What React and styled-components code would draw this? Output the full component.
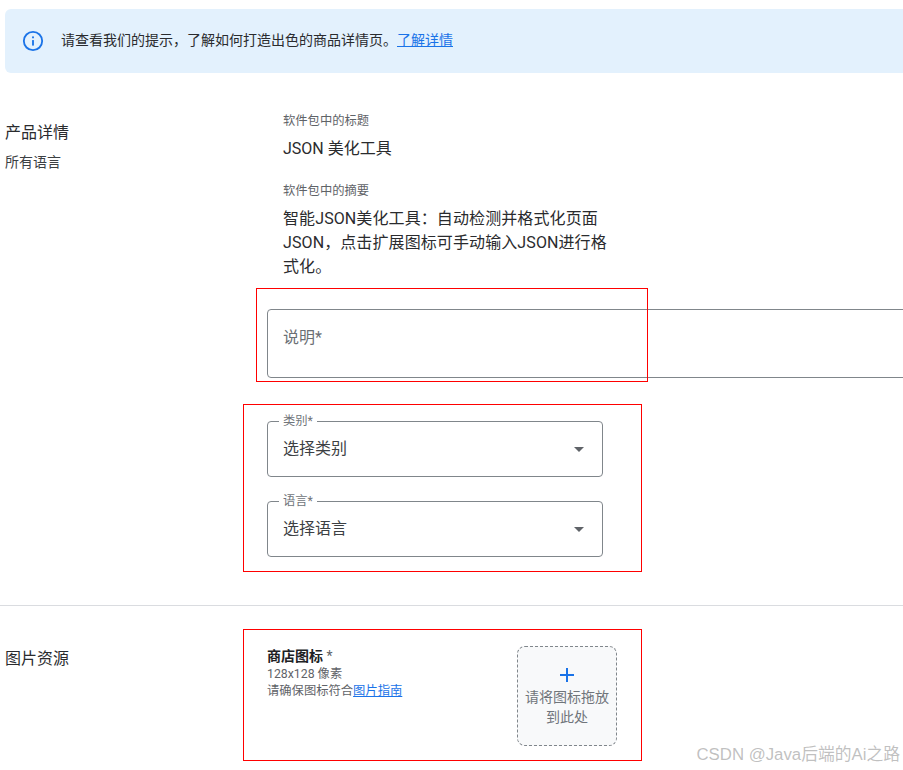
import React from "react";
import styled, { createGlobalStyle } from "styled-components";

const Global = createGlobalStyle`
  html, body { margin: 0; padding: 0; background: #fff; overflow: hidden; }
  body { font-family: Roboto, "Noto Sans CJK SC", sans-serif; color: #2a2b2e; }
`;
const Page = styled.div`
  position: relative;
  width: 903px;
  height: 770px;
  overflow: hidden;
  padding-top: 9px;
  box-sizing: border-box;
`;
const Banner = styled.div`
  display: flex;
  align-items: center;
  gap: 17px;
  height: 64px;
  margin-left: 5px;
  margin-right: -20px;
  padding-left: 17px;
  background: #e3f1fd;
  border-radius: 6px;
  font-size: 14px;
`;
const BannerIcon = styled.svg`
  width: 22px;
  height: 22px;
  flex: none;
`;
const BannerText = styled.span`
  padding-bottom: 5px;
`;
const Link = styled.a`
  color: #1a73e8;
  text-decoration: underline;
`;
const Section = styled.section`
  display: grid;
  grid-template-columns: 262px 1fr;
  padding-left: 5px;
  padding-top: ${(p) => p.$top}px;
`;
const SideTitle = styled.div`
  font-size: 16px;
  line-height: 24px;
  padding-top: ${(p) => p.$top}px;
`;
const SideSub = styled.div`
  font-size: 14px;
  line-height: 20px;
  margin-top: 7px;
  color: #3c4043;
`;
const ReadOnly = styled.div`
  padding-left: 16px;
  margin-bottom: ${(p) => p.$gap}px;
`;
const ReadLabel = styled.div`
  font-size: 12.3px;
  line-height: 16px;
  color: #5f6368;
  margin-bottom: 8px;
`;
const ReadValue = styled.div`
  font-size: 16px;
  line-height: 24px;
  width: 330px;
  letter-spacing: ${(p) => p.$track || 0}px;
`;
const Description = styled.div`
  box-sizing: border-box;
  height: 69px;
  margin-right: -40px;
  margin-top: 30px;
  padding: 16px 15px;
  border: 1px solid #80868b;
  border-radius: 4px;
  font-size: 16px;
  line-height: 24px;
  color: #6b6f74;
`;
const Select = styled.div`
  position: relative;
  box-sizing: border-box;
  display: flex;
  align-items: center;
  justify-content: space-between;
  width: 336px;
  height: 56px;
  margin-top: ${(p) => p.$top}px;
  padding: 0 18px 0 15px;
  border: 1px solid #80868b;
  border-radius: 4px;
  font-size: 16px;
  color: #3c4043;
`;
const SelectValue = styled.span`
  padding-bottom: 4px;
`;
const Legend = styled.span`
  position: absolute;
  left: 11px;
  top: -9px;
  padding: 0 4px;
  background: #fff;
  font-size: 12.3px;
  line-height: 16px;
  color: #70757a;
`;
const Caret = styled.span`
  width: 0;
  height: 0;
  border-left: 5px solid transparent;
  border-right: 5px solid transparent;
  border-top: 5px solid #5f6368;
`;
const Divider = styled.hr`
  margin: 48px 0 0;
  border: 0;
  border-top: 1px solid #dadce0;
`;
const AssetRow = styled.div`
  display: flex;
  width: 350px;
  justify-content: space-between;
`;
const AssetText = styled.div`
  padding-top: 0;
`;
const AssetTitle = styled.div`
  font-size: 14px;
  line-height: 20px;
  font-weight: 700;
  color: #202124;
`;
const Star = styled.span`
  font-weight: 400;
  color: #5f6368;
`;
const AssetNote = styled.div`
  font-size: 12.3px;
  line-height: 17px;
  color: #5f6368;
`;
const Drop = styled.div`
  box-sizing: border-box;
  display: flex;
  flex-direction: column;
  align-items: center;
  width: 100px;
  height: 100px;
  padding-top: 20px;
  background: #f8f9fa;
  border: 1px dashed #80868b;
  border-radius: 8px;
  font-size: 14px;
  line-height: 20px;
  color: #70757a;
  text-align: center;
`;
const Plus = styled.svg`
  width: 16px;
  height: 16px;
  margin-bottom: 4px;
`;
const Annotation = styled.div`
  position: absolute;
  left: ${(p) => p.$x}px;
  top: ${(p) => p.$y}px;
  width: ${(p) => p.$w}px;
  height: ${(p) => p.$h}px;
  box-sizing: border-box;
  border: 1px solid #f00;
  pointer-events: none;
`;
const Watermark = styled.div`
  position: absolute;
  right: 3px;
  top: 744px;
  font-family: "Liberation Sans", "Noto Sans CJK SC", sans-serif;
  font-size: 16.8px;
  line-height: 22px;
  color: rgba(130, 130, 130, 0.5);
`;

export default function App() {
  return (
    <Page>
      <Global />
      <Banner>
        <BannerIcon viewBox="0 0 24 24">
          <circle cx="12" cy="12" r="10" fill="none" stroke="#1a73e8" strokeWidth="2" />
          <rect x="11" y="11" width="2" height="6" fill="#1a73e8" />
          <rect x="11" y="7" width="2" height="2" fill="#1a73e8" />
        </BannerIcon>
        <BannerText>
          请查看我们的提示，了解如何打造出色的商品详情页。<Link>了解详情</Link>
        </BannerText>
      </Banner>
      <Section $top={40}>
        <div>
          <SideTitle $top={8}>产品详情</SideTitle>
          <SideSub>所有语言</SideSub>
        </div>
        <div>
          <ReadOnly $gap={22}>
            <ReadLabel>软件包中的标题</ReadLabel>
            <ReadValue>JSON 美化工具</ReadValue>
          </ReadOnly>
          <ReadOnly $gap={0}>
            <ReadLabel>软件包中的摘要</ReadLabel>
            <ReadValue $track={0.1}>智能JSON美化工具：自动检测并格式化页面JSON，点击扩展图标可手动输入JSON进行格式化。</ReadValue>
          </ReadOnly>
          <Description>说明*</Description>
          <Select $top={43}>
            <Legend>类别*</Legend>
            <SelectValue>选择类别</SelectValue>
            <Caret />
          </Select>
          <Select $top={24}>
            <Legend>语言*</Legend>
            <SelectValue>选择语言</SelectValue>
            <Caret />
          </Select>
        </div>
      </Section>
      <Divider />
      <Section $top={40}>
        <SideTitle $top={1}>图片资源</SideTitle>
        <AssetRow>
          <AssetText>
            <AssetTitle>商店图标 <Star>*</Star></AssetTitle>
            <AssetNote>128x128 像素</AssetNote>
            <AssetNote>请确保图标符合<Link>图片指南</Link></AssetNote>
          </AssetText>
          <Drop>
            <Plus viewBox="0 0 16 16">
              <path d="M8 1v14M1 8h14" stroke="#1a73e8" strokeWidth="2" fill="none" />
            </Plus>
            <span>请将图标拖放<br />到此处</span>
          </Drop>
        </AssetRow>
      </Section>
      <Annotation $x={256} $y={288} $w={392} $h={94} />
      <Annotation $x={243} $y={404} $w={399} $h={168} />
      <Annotation $x={243} $y={629} $w={399} $h={132} />
      <Watermark>CSDN @Java后端的Ai之路</Watermark>
    </Page>
  );
}
